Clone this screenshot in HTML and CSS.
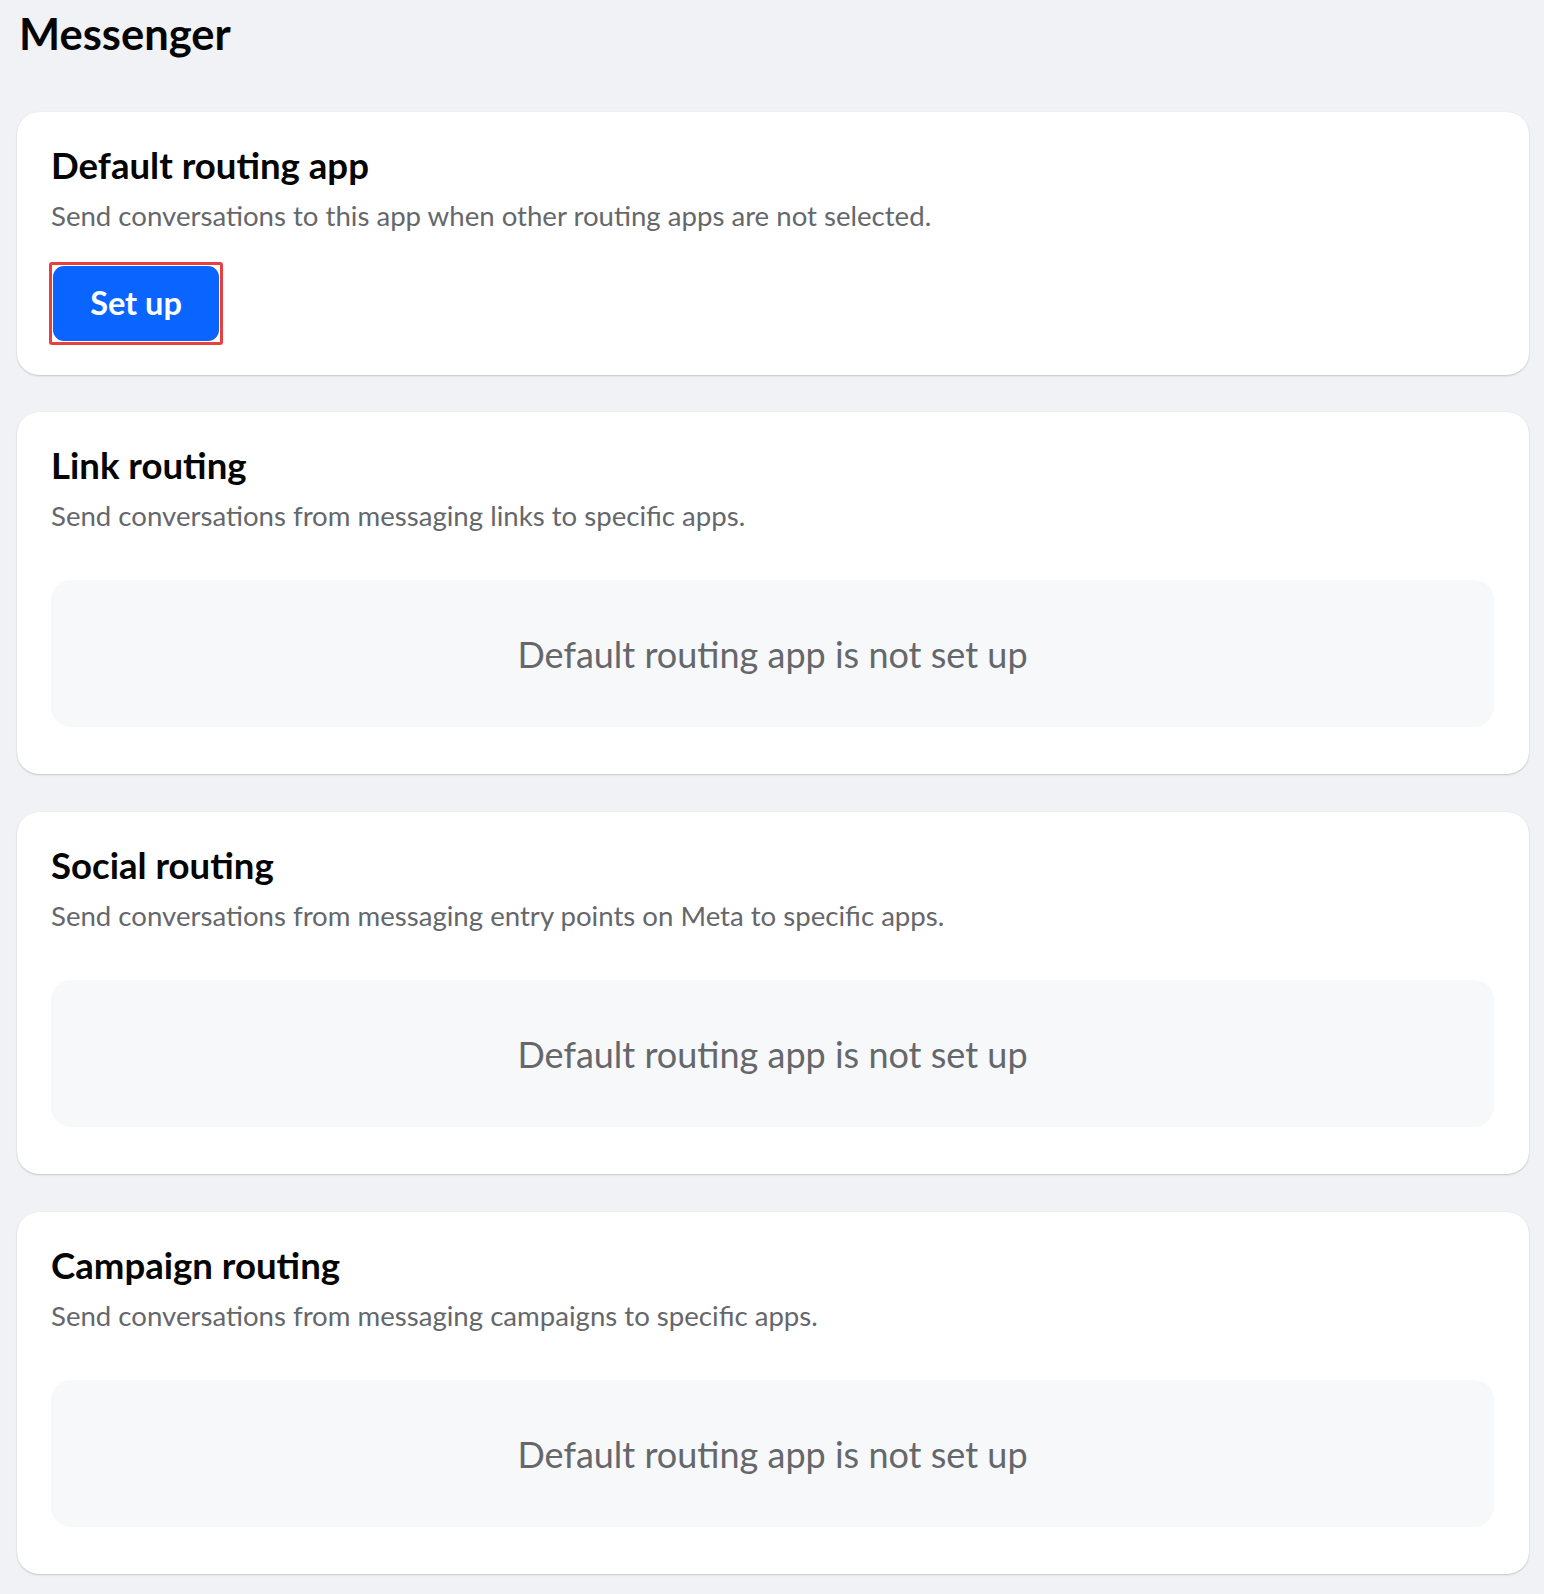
FILE: index.html
```html
<!DOCTYPE html>
<html lang="en">
<head>
<meta charset="utf-8">
<title>Messenger routing</title>
<link rel="stylesheet" href="styles.css">
</head>
<body>
<main class="page">
  <h1 class="page-title">Messenger</h1>

  <section class="card">
    <h2 class="card-title">Default routing app</h2>
    <p class="card-desc">Send conversations to this app when other routing apps are not selected.</p>
    <div class="highlight">
      <button class="btn-primary" type="button">Set up</button>
    </div>
  </section>

  <section class="card">
    <h2 class="card-title">Link routing</h2>
    <p class="card-desc">Send conversations from messaging links to specific apps.</p>
    <div class="empty">Default routing app is not set up</div>
  </section>

  <section class="card">
    <h2 class="card-title">Social routing</h2>
    <p class="card-desc">Send conversations from messaging entry points on Meta to specific apps.</p>
    <div class="empty">Default routing app is not set up</div>
  </section>

  <section class="card">
    <h2 class="card-title">Campaign routing</h2>
    <p class="card-desc">Send conversations from messaging campaigns to specific apps.</p>
    <div class="empty">Default routing app is not set up</div>
  </section>
</main>
</body>
</html>
```

FILE: styles.css
```css
* {
  box-sizing: border-box;
}

html, body {
  margin: 0;
  padding: 0;
  background: #f0f2f5;
}

body {
  font-family: "Lato", "Noto Sans", "Liberation Sans", sans-serif;
  color: #1c1e21;
}

.page {
  padding: 7px 15px 20px 17px;
  display: flex;
  flex-direction: column;
  gap: 37.5px;
}

.page-title {
  margin: 0 0 15px 2px;
  font-size: 43.5px;
  line-height: 1.2;
  font-weight: 700;
  color: #050505;
}

.card {
  background: #ffffff;
  border-radius: 22px;
  box-shadow: 0 1px 2px rgba(0, 0, 0, 0.18), 0 0 1px rgba(0, 0, 0, 0.06);
  padding: 32px 35px 30px 34px;
  display: flex;
  flex-direction: column;
  align-items: flex-start;
}

.card-title {
  margin: 0;
  font-size: 36.6px;
  line-height: 1.2;
  font-weight: 700;
  color: #050505;
}

.card-desc {
  margin: 11px 0 0;
  font-size: 27.6px;
  line-height: 1.2;
  font-weight: 400;
  color: #65676b;
}

.highlight {
  margin-top: 30px;
  margin-left: -2px;
  border: 3px solid #e8403f;
  border-radius: 3px;
  padding: 1px;
  display: flex;
}

.btn-primary {
  width: 166px;
  height: 75px;
  border: 0;
  border-radius: 11px;
  background: #0a64ff;
  color: #ffffff;
  font-family: inherit;
  font-size: 32.5px;
  font-weight: 700;
  padding: 0 0 2px;
  cursor: pointer;
}

.empty {
  align-self: stretch;
  margin: 48px 0 17px;
  padding: 53px 0 51px;
  background: #f7f8fa;
  border-radius: 20px;
  text-align: center;
  font-size: 36px;
  line-height: 1.2;
  color: #65676b;
}
```
